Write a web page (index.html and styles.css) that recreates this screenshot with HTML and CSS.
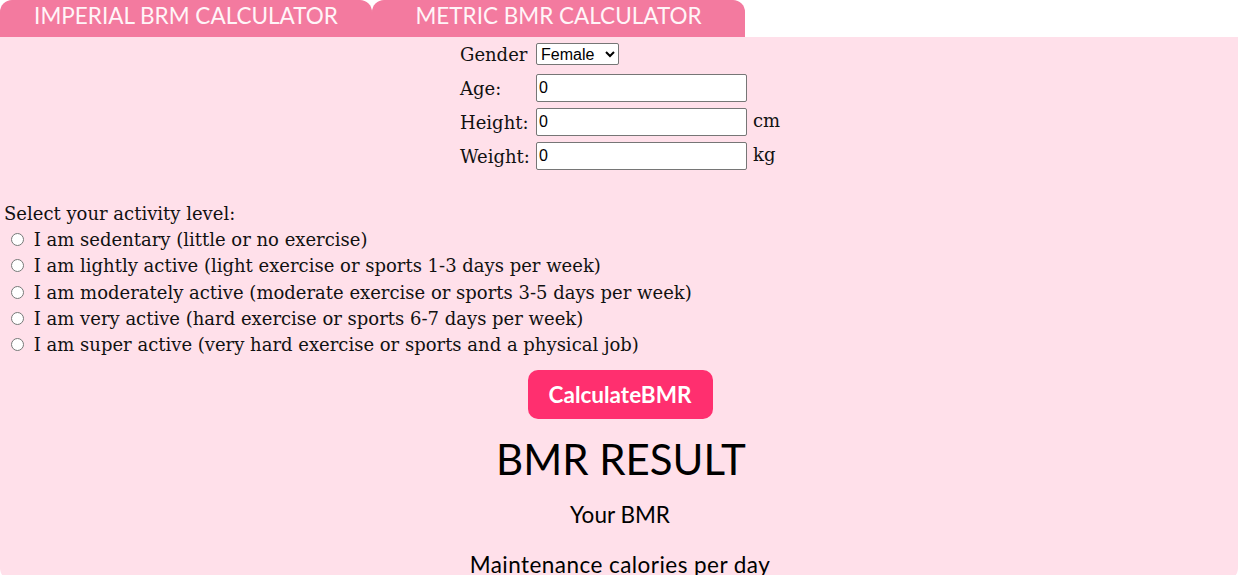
FILE: index.html
```html
<!DOCTYPE html>
<html>
<head>
<meta charset="utf-8">
<link rel="stylesheet" href="styles.css">
</head>
<body>
<div class="tabs">
  <div class="tab tab-imperial">IMPERIAL BRM CALCULATOR</div>
  <div class="tab tab-metric">METRIC BMR CALCULATOR</div>
</div>
<div class="panel">
  <div class="form">
    <label class="lbl">Gender</label>
    <div class="cell"><select class="sel"><option>Female</option><option>Male</option></select></div>
    <span class="unit"></span>
    <label class="lbl">Age:</label>
    <div class="cell"><input class="inp" type="text" value="0"></div>
    <span class="unit"></span>
    <label class="lbl">Height:</label>
    <div class="cell"><input class="inp" type="text" value="0"></div>
    <span class="unit">cm</span>
    <label class="lbl">Weight:</label>
    <div class="cell"><input class="inp" type="text" value="0"></div>
    <span class="unit">kg</span>
  </div>
  <div class="activity">
    <div class="line">Select your activity level:</div>
    <label class="line opt"><input type="radio" name="act" class="radio"> I am sedentary (little or no exercise)</label>
    <label class="line opt"><input type="radio" name="act" class="radio"> I am lightly active (light exercise or sports 1-3 days per week)</label>
    <label class="line opt"><input type="radio" name="act" class="radio"> I am moderately active (moderate exercise or sports 3-5 days per week)</label>
    <label class="line opt"><input type="radio" name="act" class="radio"> I am very active (hard exercise or sports 6-7 days per week)</label>
    <label class="line opt"><input type="radio" name="act" class="radio"> I am super active (very hard exercise or sports and a physical job)</label>
  </div>
  <div class="btn-row"><button class="calc">CalculateBMR</button></div>
  <h1 class="result-title">BMR RESULT</h1>
  <p class="result-line result-bmr">Your BMR</p>
  <p class="result-line result-last">Maintenance calories per day</p>
</div>
</body>
</html>
```
FILE: styles.css
```css
html, body {
  margin: 0;
  padding: 0;
  background: #ffffff;
}
body {
  font-family: "DejaVu Serif", "Liberation Serif", serif;
  color: #111111;
}
.tabs {
  display: flex;
  height: 37px;
}
.tab {
  background: #f37a9f;
  color: #fff5f8;
  font-family: "Lato", "Noto Sans", sans-serif;
  font-size: 22.5px;
  font-weight: 400;
  height: 37px;
  line-height: 32px;
  text-align: center;
  border-radius: 12px 12px 0 0;
}
.tab-imperial { width: 372px; }
.tab-metric { width: 373px; }
.panel {
  background: #ffe0ea;
  padding: 3px 0 1px;
  border-radius: 0 0 12px 12px;
}
.form {
  display: grid;
  grid-template-columns: 77px 216px 36px;
  grid-auto-rows: 28px;
  row-gap: 6px;
  justify-content: center;
  align-items: center;
  font-size: 18px;
  margin-left: 9px;
}
.lbl { padding-left: 1px; white-space: nowrap; }
.cell { display: flex; align-items: center; }
.sel {
  font-family: "Liberation Sans", Arial, sans-serif;
  font-size: 16px;
  height: 22px;
  width: 83px;
  padding: 0;
  border: 1px solid #767676;
  border-radius: 2px;
  background: #ffffff;
  color: #000;
}
.inp {
  box-sizing: border-box;
  width: 211px;
  height: 28px;
  border: 1px solid #767676;
  border-radius: 2px;
  padding: 1px 2px;
  font-family: "Liberation Sans", Arial, sans-serif;
  font-size: 16px;
  color: #000;
  background: #fff;
  margin: 0;
}
.unit { padding-left: 1px; margin-top: -4px; }
.activity {
  margin-top: 30px;
  padding-left: 4px;
  font-size: 18px;
  display: flex;
  flex-direction: column;
}
.line {
  height: 26.3px;
  display: flex;
  align-items: center;
  white-space: pre;
}
.radio {
  margin: 0 4px 0 7px;
  width: 13px;
  height: 13px;
}
.btn-row {
  display: flex;
  justify-content: center;
  margin-top: 12px;
  padding-left: 2px;
}
.calc {
  width: 185px;
  height: 49px;
  background: #ff2f6f;
  color: #ffffff;
  border: none;
  border-radius: 10px;
  font-family: "Lato", "Noto Sans", sans-serif;
  font-size: 22.5px;
  font-weight: 700;
}
.result-title {
  margin: 19px 0 0;
  text-align: center;
  font-family: "Lato", "Noto Sans", sans-serif;
  font-weight: 400;
  font-size: 42px;
  line-height: 42px;
  color: #000;
  padding-left: 4px;
}
.result-line {
  margin: 0;
  text-align: center;
  font-family: "Lato", "Noto Sans", sans-serif;
  font-size: 22.5px;
  line-height: 24px;
  color: #000;
  font-weight: 400;
  padding-left: 2px;
}
.result-bmr { margin-top: 23px; }
.result-last { margin-top: 26px; padding-bottom: 2px; letter-spacing: 0.45px; }
```
